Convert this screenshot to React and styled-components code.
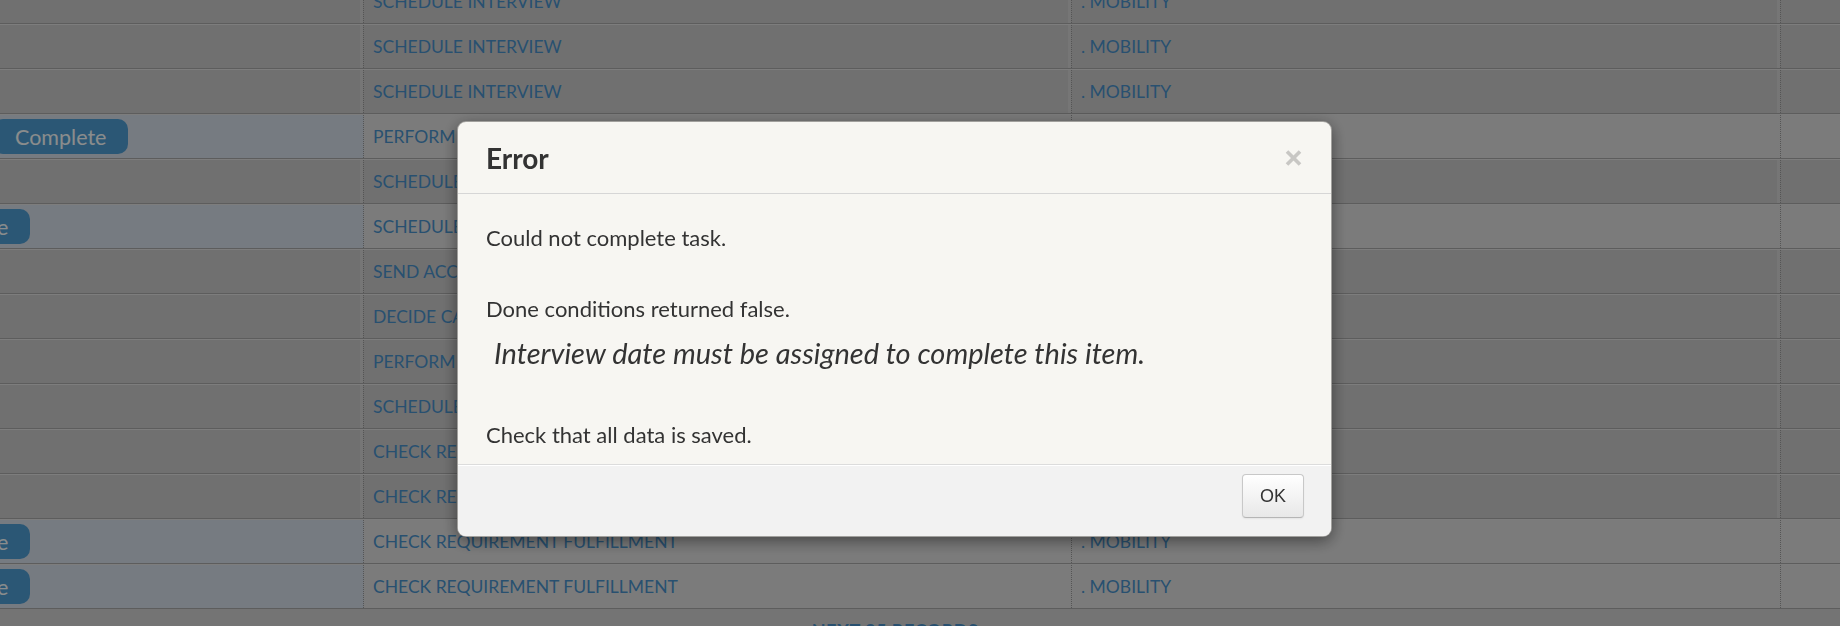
import React from "react";
import styled, { createGlobalStyle } from "styled-components";

const GlobalStyle = createGlobalStyle`
  html, body {
    margin: 0;
    padding: 0;
  }
  body {
    width: 1840px;
    height: 626px;
    overflow: hidden;
    background: #d3d3d3;
    font-family: Lato, "Open Sans", sans-serif;
  }
`;

const Page = styled.div`
  position: relative;
  width: 1840px;
  height: 626px;
  overflow: hidden;
`;

// the list is scrolled a little, so it starts above and left of the window
const TaskTable = styled.div`
  display: flex;
  flex-direction: column;
  width: 2090px;
  margin: -21px 0 0 -150px;
`;

const Row = styled.div`
  display: grid;
  grid-template-columns: 514px 708px 709px 1fr;
  height: 45px;
  box-sizing: border-box;
  border-top: 1px solid #e3e3e3;
  border-bottom: 1px solid #a9a9a9;
  background: ${({ $active }) => ($active ? "#e1e1e1" : "#cdcdcd")};
`;

const Cell = styled.div`
  display: flex;
  align-items: center;
  padding-left: 9px;
  border-right: 1px dotted #9b9b9b;
  box-shadow: ${({ $active }) => ($active ? "none" : "inset -3px 0 0 #d7d7d7")};
  color: #4a93cc;
  font-size: 17.5px;
  white-space: nowrap;
  overflow: hidden;
`;

const ActionCell = styled(Cell)`
  padding-left: ${({ $level }) => 45 + $level * 98}px;
  background: ${({ $active }) => ($active ? "#d7e1eb" : "transparent")};
`;

const ActionButton = styled.button`
  height: 35px;
  padding: 0 22px;
  border: 0;
  border-radius: 10px;
  background: #4f9fd6;
  color: #fbffff;
  font-family: Lato, sans-serif;
  font-size: 21.5px;
  white-space: nowrap;
`;

const Pager = styled.div`
  display: flex;
  justify-content: center;
  padding-top: 11px;
  color: #4a93cc;
  font-size: 18px;
  font-weight: 700;
  letter-spacing: 0.5px;
`;

const Backdrop = styled.div`
  position: fixed;
  inset: 0;
  background: rgba(0, 0, 0, 0.45);
`;

const Dialog = styled.div`
  position: fixed;
  top: 121px;
  left: 457px;
  width: 875px;
  box-sizing: border-box;
  background: #f7f6f2;
  border: 1px solid rgba(0, 0, 0, 0.35);
  border-radius: 9px;
  box-shadow: 0 4px 16px rgba(0, 0, 0, 0.45);
  overflow: hidden;
  color: #333;
  font-family: Lato, "Open Sans", sans-serif;
`;

const Header = styled.div`
  display: flex;
  align-items: center;
  justify-content: space-between;
  height: 71px;
  padding: 0 29px 0 28px;
  border-bottom: 1px solid #d6d6d6;
`;

const Title = styled.h3`
  margin: 0;
  font-size: 28px;
  font-weight: 700;
  color: #333;
`;

const CloseButton = styled.button`
  display: flex;
  padding: 0;
  border: 0;
  background: none;
  color: #c8c7c4;
`;

const Body = styled.div`
  display: flex;
  flex-direction: column;
  padding: 29px 28px 14px;
`;

const Message = styled.p`
  margin: ${({ $gap }) => $gap}px 0 0;
  font-size: 22px;
  line-height: 30px;
`;

const Emphasis = styled.h4`
  margin: 12px 0 0 8px;
  font-size: 29px;
  line-height: 34px;
  font-style: italic;
  font-weight: 400;
`;

const Footer = styled.div`
  display: flex;
  justify-content: flex-end;
  padding: 9px 27px 18px;
  background: #f2f2f2;
  border-top: 1px solid #dcdcdc;
  box-shadow: inset 0 1px 0 #ffffff;
`;

const OkButton = styled.button`
  width: 62px;
  height: 44px;
  padding: 0;
  border: 1px solid #c8c8c8;
  border-bottom-color: #b5b5b5;
  border-radius: 4px;
  background: linear-gradient(#ffffff, #e8e8e8);
  box-shadow: 0 1px 2px rgba(0, 0, 0, 0.06);
  color: #333;
  font-family: "Liberation Sans", Arial, sans-serif;
  font-size: 18px;
`;

const tasks = [
  { name: "SCHEDULE INTERVIEW" },
  { name: "SCHEDULE INTERVIEW" },
  { name: "SCHEDULE INTERVIEW" },
  { name: "PERFORM INTERVIEW", action: "Complete", level: 1 },
  { name: "SCHEDULE INTERVIEW" },
  { name: "SCHEDULE INTERVIEW", action: "Complete", level: 0 },
  { name: "SEND ACCEPTANCE LETTER" },
  { name: "DECIDE CANDIDATE" },
  { name: "PERFORM INTERVIEW" },
  { name: "SCHEDULE INTERVIEW" },
  { name: "CHECK REQUIREMENT FULFILLMENT" },
  { name: "CHECK REQUIREMENT FULFILLMENT" },
  { name: "CHECK REQUIREMENT FULFILLMENT", action: "Complete", level: 0 },
  { name: "CHECK REQUIREMENT FULFILLMENT", action: "Complete", level: 0 },
];

const CloseIcon = () => (
  <svg width="17" height="16" viewBox="0 0 17 16" fill="none">
    <path d="M2 1.5L15 14.5M15 1.5L2 14.5" stroke="currentColor" strokeWidth="3.6" />
  </svg>
);

const App = () => {
  return (
    <Page>
      <GlobalStyle />
      <TaskTable>
        {tasks.map((task, i) => {
          const active = Boolean(task.action);
          return (
            <Row key={i} $active={active}>
              <ActionCell $active={active} $level={task.level || 0}>
                {task.action ? <ActionButton>{task.action}</ActionButton> : null}
              </ActionCell>
              <Cell $active={active}>{task.name}</Cell>
              <Cell $active={active}>. MOBILITY</Cell>
              <Cell $active={active} />
            </Row>
          );
        })}
        <Pager>NEXT 25 RECORDS</Pager>
      </TaskTable>

      <Backdrop />
      <Dialog>
        <Header>
          <Title>Error</Title>
          <CloseButton>
            <CloseIcon />
          </CloseButton>
        </Header>
        <Body>
          <Message $gap={0}>Could not complete task.</Message>
          <Message $gap={41}>Done conditions returned false.</Message>
          <Emphasis>Interview date must be assigned to complete this item.</Emphasis>
          <Message $gap={50}>Check that all data is saved.</Message>
        </Body>
        <Footer>
          <OkButton>OK</OkButton>
        </Footer>
      </Dialog>
    </Page>
  );
};

export default App;
